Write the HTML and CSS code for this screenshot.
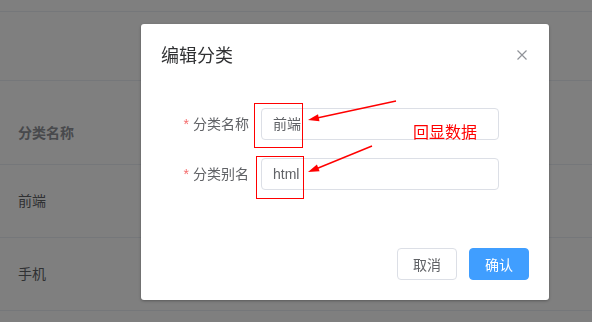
FILE: index.html
```html
<!DOCTYPE html>
<html lang="zh-CN">
<head>
    <meta charset="UTF-8">
    <meta name="viewport" content="width=device-width, initial-scale=1.0">
    <title>编辑分类</title>
    <link rel="stylesheet" href="styles.css">
</head>
<body>
    <!-- page behind the dialog -->
    <div class="page">
        <div class="topbar"></div>
        <div class="toolbar"></div>
        <div class="table-row table-head"><span>分类名称</span></div>
        <div class="table-row"><span>前端</span></div>
        <div class="table-row"><span>手机</span></div>
    </div>

    <div class="mask"></div>

    <div class="dialog">
        <div class="dialog-header">
            <span class="dialog-title">编辑分类</span>
            <span class="close">
                <svg width="10" height="10" viewBox="0 0 10 10">
                    <path d="M0.5 0.5 L9.5 9.5 M9.5 0.5 L0.5 9.5" stroke="#909399" stroke-width="1.2" fill="none"/>
                </svg>
            </span>
        </div>
        <div class="dialog-body">
            <div class="form-item">
                <label class="form-label"><span class="star">*</span>分类名称</label>
                <div class="input">前端</div>
            </div>
            <div class="form-item">
                <label class="form-label"><span class="star">*</span>分类别名</label>
                <div class="input">html</div>
            </div>
        </div>
        <div class="dialog-footer">
            <button class="btn">取消</button>
            <button class="btn btn-primary">确认</button>
        </div>
    </div>

    <!-- red annotations drawn over the screenshot -->
    <div class="mark mark-1"></div>
    <div class="mark mark-2"></div>
    <svg class="arrows" width="592" height="322">
        <line x1="396" y1="101" x2="317" y2="118" stroke="#f00" stroke-width="1.4"/>
        <polygon points="308,120 319.5,121.3 318,114.2" fill="#f00"/>
        <line x1="372" y1="146" x2="317" y2="168.5" stroke="#f00" stroke-width="1.4"/>
        <polygon points="308,172 319.6,171.2 316.9,164.6" fill="#f00"/>
    </svg>
    <span class="note">回显数据</span>
</body>
</html>
```

FILE: styles.css
```css
body {
    margin: 0;
    font-family: "Liberation Sans", "Noto Sans CJK SC", sans-serif;
    font-size: 14px;
    overflow: hidden;
}

/* background page */
.page {
    background: #fff;
    height: 322px;
}

.topbar {
    height: 11px;
    border-bottom: 1px solid #ebeef5;
}

.toolbar {
    height: 68px;
    border-bottom: 1px solid #ebeef5;
}

.table-row {
    height: 73px;
    padding: 25px 0 0 18px;
    box-sizing: border-box;
    line-height: 23px;
    color: #606266;
    border-bottom: 1px solid #ebeef5;
}

.table-head {
    height: 84px;
    padding-top: 41px;
    color: #909399;
    font-weight: bold;
}

.mask {
    position: fixed;
    left: 0;
    top: 0;
    width: 100%;
    height: 100%;
    background: rgba(0, 0, 0, 0.5);
}

/* dialog */
.dialog {
    position: absolute;
    left: 141px;
    top: 24px;
    width: 408px;
    background: #fff;
    border-radius: 3px;
    box-shadow: 0 1px 3px rgba(0, 0, 0, 0.3);
}

.dialog-header {
    position: relative;
    padding: 20px 20px 10px;
}

.dialog-title {
    display: block;
    font-size: 18px;
    line-height: 24px;
    color: #303133;
}

.close {
    position: absolute;
    top: 26px;
    right: 22px;
    width: 10px;
    height: 10px;
    line-height: 0;
}

.dialog-body {
    padding: 30px 20px;
}

.form-item {
    display: flex;
    margin-bottom: 18px;
}

.form-label {
    width: 100px;
    padding-right: 12px;
    box-sizing: border-box;
    text-align: right;
    line-height: 32px;
    color: #606266;
}

.star {
    color: #f56c6c;
    margin-right: 4px;
}

.input {
    width: 238px;
    height: 32px;
    box-sizing: border-box;
    padding: 0 11px;
    border: 1px solid #dcdfe6;
    border-radius: 4px;
    line-height: 30px;
    color: #606266;
}

.dialog-footer {
    display: flex;
    justify-content: flex-end;
    gap: 12px;
    padding: 10px 20px 20px;
}

.btn {
    width: 60px;
    height: 32px;
    padding: 0;
    border: 1px solid #dcdfe6;
    border-radius: 4px;
    background: #fff;
    color: #606266;
    font-family: inherit;
    font-size: 14px;
}

.btn-primary {
    background: #409eff;
    border-color: #409eff;
    color: #fff;
}

/* annotations */
.mark {
    position: absolute;
    border: 1px solid #f00;
}

.mark-1 {
    left: 254px;
    top: 103px;
    width: 47px;
    height: 43px;
}

.mark-2 {
    left: 256px;
    top: 156px;
    width: 46px;
    height: 41px;
}

.arrows {
    position: absolute;
    left: 0;
    top: 0;
}

.note {
    position: absolute;
    left: 413px;
    top: 121px;
    font-size: 16px;
    line-height: 24px;
    color: #f00;
}
```
